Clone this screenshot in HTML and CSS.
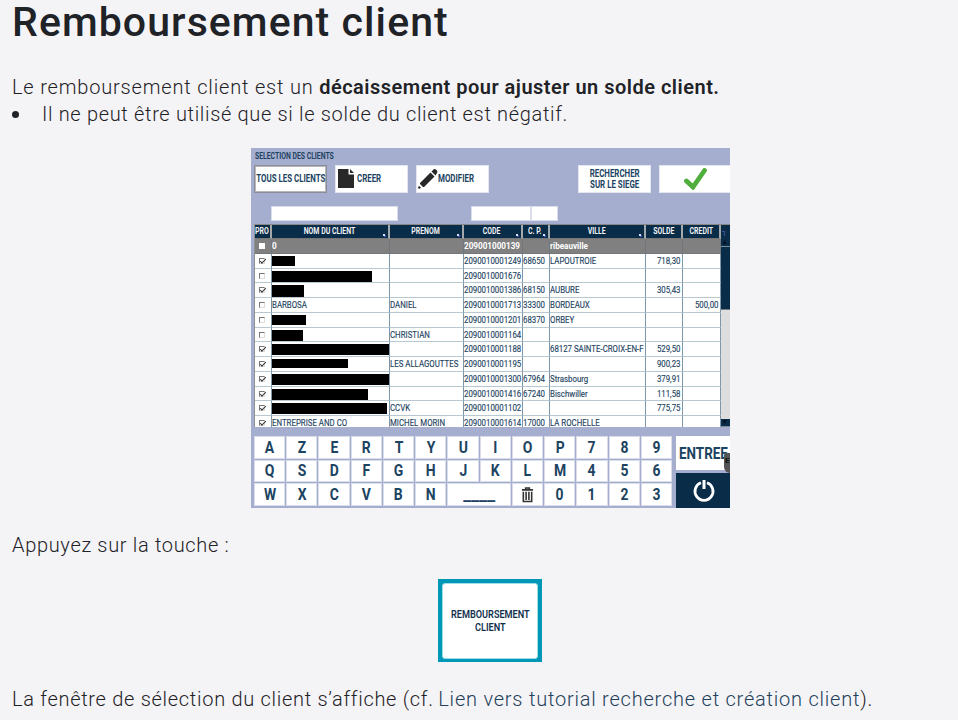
FILE: index.html
```html
<!DOCTYPE html>
<html lang="fr">
<head>
<meta charset="utf-8">
<title>Remboursement client</title>
<link rel="stylesheet" href="styles.css">
</head>
<body>
<main>
<h1>Remboursement client</h1>
<p class="intro"><span class="lead">Le remboursement client est un</span> <strong>décaissement pour ajuster un solde client.</strong></p>
<ul><li>Il ne peut être utilisé que si le solde du client est négatif.</li></ul>
<section class="app">
  <div class="title"><span>SELECTION DES CLIENTS</span></div>
  <div class="toolbar">
    <div class="btn all"><span>TOUS LES CLIENTS</span></div>
    <div class="btn icon"><svg class="doc" viewBox="0 0 16 19" width="16" height="19"><path fill="#282828" d="M0 0h10.500v5.500H16V19H0zM12 0l4 4h-4z"/></svg><span>CREER</span></div>
    <div class="btn icon"><svg class="pen" viewBox="0 0 20 20" width="20" height="20"><path fill="#282828" d="M2 14L12.500 3.500l4 4L6 18H2zM13.500 2.500L15.500.500q1.500-1 3 .500t.500 3L17.500 6.500z"/><path fill="#fff" d="M1 14l4.500 4.500L0 20z"/><circle cx="1.300" cy="18.500" r="1.300" fill="#282828"/></svg><span>MODIFIER</span></div>
    <div class="btn seek"><span>RECHERCHER<br>SUR LE SIEGE</span></div>
    <div class="btn ok"><svg viewBox="0 0 24 22" width="24" height="22"><path d="M2.500 13l6.500 6L20.500 2.500" fill="none" stroke="#4fae3c" stroke-width="4.800" stroke-linecap="round"/></svg></div>
  </div>
  <div class="fields"><i class="f1"></i><i class="f2"></i><i class="f3"></i></div>
  <div class="table">
    <div class="grid" id="grid"></div>
    <div class="scroll"><div class="corner">┐</div><div class="up">▴</div><div class="thumb"></div><div class="track"></div><div class="down">▾</div></div>
  </div>
  <div class="bottom">
    <div class="keys" id="keys"></div>
    <div class="side"><div class="enter"><span>ENTREE</span></div><div class="power"><svg viewBox="0 0 24 24" width="24" height="24"><path d="M9 3.800A9 9 0 1 0 15 3.800" fill="none" stroke="#fff" stroke-width="2.800"/><path d="M12 1v9" stroke="#fff" stroke-width="3"/></svg></div></div>
    <div class="tab">E</div>
  </div>
</section>
<p class="press">Appuyez sur la touche :</p>
<div class="touch"><div><span>REMBOURSEMENT<br>CLIENT</span></div></div>
<p class="last">La fenêtre de sélection du client s’affiche (cf. <a>Lien vers tutorial recherche et création client</a>).</p>
</main>
<script src="app.js"></script>
</body>
</html>
```
FILE: styles.css
```css
*{box-sizing:border-box}
body{margin:0;background:#f4f4f7;color:#1f2226;font-family:Roboto,"Liberation Sans",sans-serif;height:720px;overflow:hidden}
main{padding:0 12px;display:flex;flex-direction:column}
h1{margin:0;height:74px;font-size:41px;line-height:45px;font-weight:500;letter-spacing:1.08px;white-space:nowrap}
p,ul{margin:0;font-size:20px;line-height:27px;font-weight:300;letter-spacing:.67px;white-space:nowrap}
.lead{letter-spacing:.82px}
strong{font-weight:600;letter-spacing:.49px}
ul{padding:0 0 0 30px;height:47px;list-style:none}
li{display:flex;align-items:center}
li::before{content:"";width:7px;height:7px;border-radius:50%;background:#1f2226;margin:0 23px 0 -30px}
.app{width:479px;height:360px;margin-left:239px;background:#a6aecf;overflow:hidden;color:#1c4361;font-weight:700;display:flex;flex-direction:column;position:relative}
.app span{display:inline-block;white-space:nowrap;transform-origin:left;transform:scaleX(.8)}
.title{height:17px;padding:2px 0 0 3.500px;font-size:9px;line-height:12px}
.app .title span{transform:scaleX(.76)}
.toolbar{height:41px;display:flex;padding-left:3px;gap:8px;font-size:10px}
.btn{width:73px;height:28px;background:#fff;display:flex;align-items:center;justify-content:center;flex:none;border:1px solid #e5e7f0;padding-bottom:1px}
.app .btn span{transform-origin:center;transform:scaleX(.79)}
.all{border:2px solid #b9b7b5;outline:1px solid #8b8d99;outline-offset:-1px}
.btn.icon{justify-content:flex-start;padding-left:2px}
.app .icon span{transform-origin:left;margin-left:3px}
.icon .pen{margin-left:-1px}
.app .icon .pen+span{margin-left:0}
.seek{margin-left:81px;text-align:center;line-height:11px}
.fields{height:18px;display:flex;padding-left:20px}
.fields i{height:15px;background:#fff;border:1px solid #dadeea}
.f1{width:127px}.f2{width:60px;margin-left:73px}.f3{width:27px}
.table{height:203px;margin-left:3px;overflow:hidden;display:flex;background:#fff;border-left:1px solid #929292}
.grid{width:466px;flex:none;margin-left:-1px}
.row{display:grid;grid-template-columns:18px 118px 74px 59px 27px 96px 37px 38px;height:14.750px;font-size:9.800px;font-weight:400;line-height:14.500px;-webkit-text-stroke:.15px #1c4361}
.row>div{border-right:1px solid #7e96a8;border-bottom:1px solid #b8c8d3;overflow:hidden;white-space:nowrap;position:relative}
.row>div>span{margin-left:.4px}
.row.head{height:15px;color:#f1f3f5;font-size:9px;font-weight:700;background:#092c49;border-top:1px solid #888;line-height:13px;-webkit-text-stroke:0}
.row.head>div{border-right:2px solid #a5a8aa;border-bottom:1px solid #777;display:flex;justify-content:center}
.row.head span{margin:0;transform-origin:center;transform:scaleX(.77)}
.row.head .sort span{margin-right:1px}
.row.head .sort::after{content:"";position:absolute;right:3px;bottom:2px;width:2px;height:2px;background:#dce2ff;box-shadow:1px 1px #4850bd}
.row.sel{background:#808080;color:#fff;font-weight:700;-webkit-text-stroke:0}
.row.sel>div{border-color:#71777c}
.row.sel>div span{transform:scaleX(.83)}
.row .num{text-align:right;padding-right:1.200px;direction:rtl}
.row .num span{transform-origin:right}
.box{display:block;width:6px;height:6px;margin:4px 0 0 5px;border:1px solid #777;border-right-color:#ddd;border-bottom-color:#ddd;position:relative}
.sel .box{background:#fff;border-color:#fff}
.box.on::after{content:"";position:absolute;left:0;top:0;width:5px;height:2px;border-left:1px solid #333;border-bottom:1px solid #333;transform:rotate(-45deg)}
.mask{display:block;background:#000;margin-top:2px;margin-left:-.5px}
.scroll{width:10px;display:flex;flex-direction:column;font-size:7px;line-height:7px;background:#ddd}
.corner{height:15px;background:#092c49;color:#7475d6;padding:4px 0 0 2px;border-top:1px solid #888}
.up,.down{height:8px;background:#092c49;color:#001020;text-align:center;border-bottom:1px solid #7b8b98}
.thumb{height:63px;background:#092c49;border-bottom:1px solid #778}
.track{flex:1}
.bottom{height:81px;padding:9px 0 0 3px;display:flex;gap:4px;position:relative}
.keys{width:418px;height:70px;display:grid;grid-template-columns:repeat(13,1fr);grid-template-rows:repeat(3,1fr);gap:1px;flex:none}
.keys div{background:#fff;display:flex;align-items:center;justify-content:center;font-size:16px;border:.5px solid #d9ddea}
.app .keys span,.app .enter span{transform-origin:center;transform:scaleX(.87)}
.keys .space{grid-column:span 2}
.app .keys .space span{transform:scaleX(1.12)}
.side{width:55px;display:flex;flex-direction:column;gap:3px}
.enter{height:34px;background:#fff;display:flex;align-items:center;font-size:16px;padding-left:3px}
.app .enter span{transform-origin:left;transform:scaleX(.84)}
.power{height:35px;background:#092c49;display:flex;align-items:center;justify-content:center}
.tab{position:absolute;right:0;top:26px;width:6px;height:20px;background:#555;color:#111;font-size:8px;line-height:15px;border-radius:2px 0 0 6px;overflow:hidden;padding-left:1px}
.press{margin-top:24px;height:47px}
.touch{width:104px;height:83px;background:#0098b6;margin-left:426px;padding:4px}
.touch div{height:76px;background:#fff;border-radius:3px;border:1px solid #9fdde8;display:flex;align-items:center;justify-content:center;text-align:center;font-size:11px;line-height:13px;font-weight:600;letter-spacing:0;color:#12304f;padding-bottom:1px}
.touch span{transform:scaleX(.83)}
.last{margin-top:24px;letter-spacing:.71px}
a{color:#1f3f5b;margin-left:-1px;letter-spacing:.78px}
```
FILE: app.js
```js
const heads = ['PRO', 'NOM DU CLIENT', 'PRENOM', 'CODE', 'C. P.', 'VILLE', 'SOLDE', 'CREDIT'];
// checked, name or [mask width, mask height], first name, code, postcode, town, balance, credit
const rows = [
  [0, '0', '', '209001000139', '', 'ribeauville', '', ''],
  [1, [23, 10], '', '2090010001249', '68650', 'LAPOUTROIE', '718,30', ''],
  [0, [100, 13], '', '2090010001676', '', '', '', ''],
  [1, [32, 12], '', '2090010001386', '68150', 'AUBURE', '305,43', ''],
  [0, 'BARBOSA', 'DANIEL', '2090010001713', '33300', 'BORDEAUX', '', '500,00'],
  [0, [34, 10], '', '2090010001201', '68370', 'ORBEY', '', ''],
  [0, [31, 11], 'CHRISTIAN', '2090010001164', '', '', '', ''],
  [1, [117, 11], '', '2090010001188', '', '68127 SAINTE-CROIX-EN-F', '529,50', ''],
  [1, [76, 9], 'LES ALLAGOUTTES', '2090010001195', '', '', '900,23', ''],
  [1, [117, 11], '', '2090010001300', '67964', 'Strasbourg', '379,91', ''],
  [1, [96, 11], '', '2090010001416', '67240', 'Bischwiller', '111,58', ''],
  [1, [115, 11], 'CCVK', '2090010001102', '', '', '775,75', ''],
  [1, 'ENTREPRISE AND CO', 'MICHEL MORIN', '2090010001614', '17000', 'LA ROCHELLE', '', '']
];
const text = t => `<span>${t}</span>`;
let html = '<div class="row head">' + heads.map((h, i) => `<div class="${i > 0 && i < 6 ? 'sort' : ''}">${text(h)}</div>`).join('') + '</div>';
rows.forEach((r, n) => {
  html += `<div class="row${n ? '' : ' sel'}">` + r.map((c, i) => {
    if (i === 0) return `<div><i class="box${c ? ' on' : ''}"></i></div>`;
    if (Array.isArray(c)) return `<div><i class="mask" style="width:${c[0]}px;height:${c[1]}px"></i></div>`;
    return `<div class="${i > 5 ? 'num' : ''}">${text(c)}</div>`;
  }).join('') + '</div>';
});
document.getElementById('grid').innerHTML = html;
const trash = '<svg viewBox="0 0 14 17" width="13" height="16"><path d="M1 3h12M5 3V1h4v2M2.500 5v10.500h9V5M5.500 5v9M8.500 5v9" fill="none" stroke="#333" stroke-width="1.700"/></svg>';
document.getElementById('keys').innerHTML = [...'AZERTYUIOP789QSDFGHJKLM456WXCVBN_#0123'].map(k =>
  k === '_' ? '<div class="space"><span>____</span></div>' : `<div>${k === '#' ? trash : text(k)}</div>`).join('');
```
